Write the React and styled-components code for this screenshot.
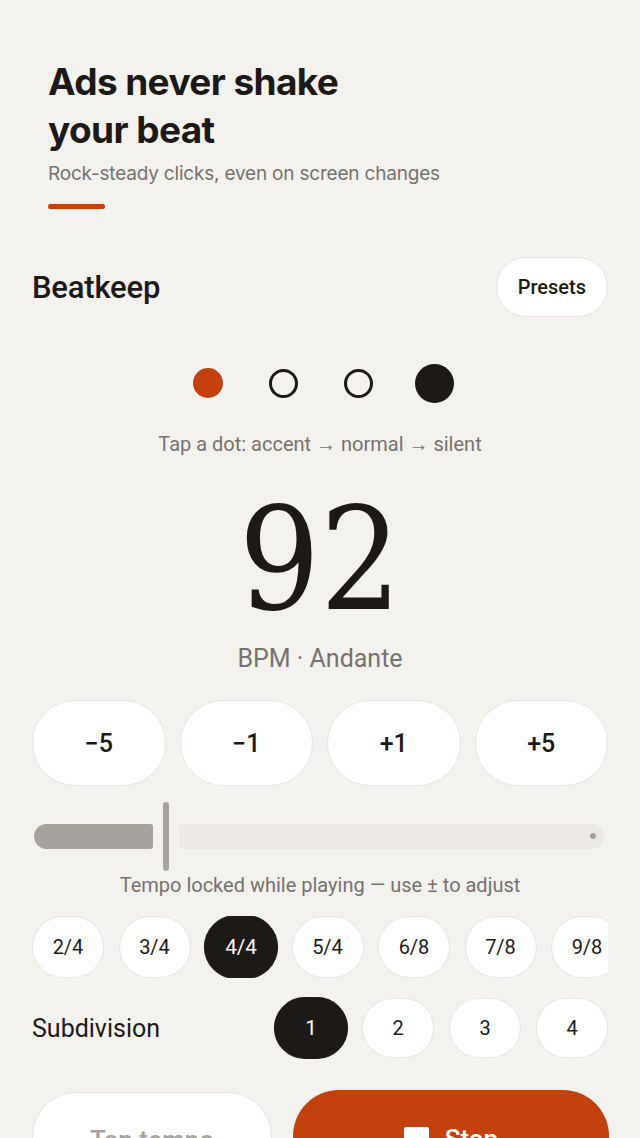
import React from "react";
import styled, { createGlobalStyle, css } from "styled-components";

const GlobalStyle = createGlobalStyle`
  html, body {
    margin: 0;
    padding: 0;
    background: #f4f2ef;
  }
  body {
    font-family: Roboto, "Liberation Sans", sans-serif;
    color: #1c1917;
  }
  * { box-sizing: border-box; }
`;

const beats = ["accent", "normal", "normal", "current"];
const steps = ["\u22125", "\u22121", "+1", "+5"];
const meters = ["2/4", "3/4", "4/4", "5/4", "6/8", "7/8", "9/8"];
const subdivisions = ["1", "2", "3", "4"];

const App = () => {
  return (
    <Page>
      <GlobalStyle />
      <Hero>
        <Headline>
          Ads never shake
          <br />
          your beat
        </Headline>
        <Tagline>Rock-steady clicks, even on screen changes</Tagline>
        <AccentBar />
      </Hero>

      <Main>
        <TopBar>
          <Brand>Beatkeep</Brand>
          <PillButton>Presets</PillButton>
        </TopBar>

        <Dots>
          {beats.map((kind, i) => (
            <Dot key={i} $kind={kind} />
          ))}
        </Dots>
        <Hint>Tap a dot: accent → normal → silent</Hint>

        <Tempo>92</Tempo>
        <TempoLabel>BPM · Andante</TempoLabel>

        <StepRow>
          {steps.map((s) => (
            <StepButton key={s}>{s}</StepButton>
          ))}
        </StepRow>

        <Slider>
          <SliderFill style={{ width: 119 }} />
          <SliderThumb />
          <SliderRest>
            <SliderEnd />
          </SliderRest>
        </Slider>
        <LockHint>Tempo locked while playing — use ± to adjust</LockHint>

        <MeterRow>
          {meters.map((m) => (
            <Chip key={m} $active={m === "4/4"} $h={62}>
              {m}
            </Chip>
          ))}
        </MeterRow>

        <SubRow>
          <SubLabel>Subdivision</SubLabel>
          <SubChips>
            {subdivisions.map((s) => (
              <Chip key={s} $active={s === "1"} $h={60}>
                {s}
              </Chip>
            ))}
          </SubChips>
        </SubRow>

        <ActionRow>
          <TapButton>Tap tempo</TapButton>
          <StopButton>
            <StopIcon />
            Stop
          </StopButton>
        </ActionRow>
      </Main>
    </Page>
  );
};

export default App;

const Page = styled.div`
  width: 640px;
  min-height: 1138px;
  overflow: hidden;
`;

const Hero = styled.header`
  padding: 58px 48px 0;
`;

const Headline = styled.h1`
  margin: 0;
  font-family: Inter, "Liberation Sans", sans-serif;
  font-weight: 700;
  font-size: 37px;
  line-height: 48px;
  letter-spacing: -0.6px;
  color: #1c1917;
`;

const Tagline = styled.p`
  margin: 7px 0 0;
  font-family: Inter, "Liberation Sans", sans-serif;
  font-size: 19px;
  line-height: 26px;
  color: #78716c;
  letter-spacing: -0.2px;
`;

const AccentBar = styled.div`
  margin-top: 17px;
  width: 57px;
  height: 5px;
  border-radius: 3px;
  background: #c2410c;
`;

const Main = styled.main`
  padding: 0 32px;
  display: flex;
  flex-direction: column;
`;

const TopBar = styled.div`
  margin-top: 48px;
  display: flex;
  align-items: center;
  justify-content: space-between;
`;

const Brand = styled.h2`
  margin: 0;
  font-size: 31px;
  font-weight: 500;
  letter-spacing: -0.2px;
`;

const PillButton = styled.button`
  height: 60px;
  padding: 0 21px;
  border-radius: 30px;
  border: 1.5px solid #e7e5e4;
  background: #ffffff;
  font-family: Roboto, sans-serif;
  font-size: 20px;
  font-weight: 500;
  color: #1c1917;
`;

const Dot = styled.span`
  display: block;
  border-radius: 50%;
  width: 30px;
  height: 30px;
  ${({ $kind }) =>
    $kind === "accent"
      ? css`
          background: #c2410c;
        `
      : $kind === "current"
      ? css`
          background: #1c1917;
          width: 39px;
          height: 39px;
          margin: 0 -4.5px;
        `
      : css`
          width: 29px;
          height: 29px;
          border: 3px solid #1c1917;
        `}
`;

const Dots = styled.div`
  margin-top: 46px;
  height: 40px;
  display: flex;
  align-items: center;
  justify-content: center;
  gap: 46px;
  padding-left: 2px;
`;

const Hint = styled.p`
  margin: 28px 0 0;
  text-align: center;
  font-size: 20px;
  line-height: 26px;
  color: #78716c;
`;

const Tempo = styled.div`
  margin-top: 28px;
  text-align: center;
  font-family: "DejaVu Serif Condensed", "DejaVu Serif", "Liberation Serif", serif;
  font-stretch: condensed;
  font-size: 142px;
  line-height: 150px;
  color: #1c1917;
`;

const TempoLabel = styled.p`
  margin: 9px 0 0;
  text-align: center;
  font-size: 25px;
  line-height: 30px;
  color: #78716c;
`;

const StepRow = styled.div`
  margin-top: 26px;
  display: grid;
  grid-template-columns: repeat(4, 1fr);
  gap: 14px;
`;

const StepButton = styled.button`
  height: 86px;
  border-radius: 43px;
  border: 1.5px solid #e7e5e4;
  background: #ffffff;
  font-family: Roboto, sans-serif;
  font-size: 25px;
  font-weight: 500;
  color: #1c1917;
`;

const Slider = styled.div`
  margin-top: 15px;
  height: 70px;
  padding-left: 2px;
  display: flex;
  align-items: center;
`;

const SliderFill = styled.div`
  height: 25px;
  border-radius: 13px 3px 3px 13px;
  background: #a8a29e;
`;

const SliderThumb = styled.div`
  width: 6px;
  height: 69px;
  margin: 0 10px;
  border-radius: 3px;
  background: #a8a29e;
`;

const SliderRest = styled.div`
  flex: 1;
  height: 25px;
  margin-right: 4px;
  border-radius: 3px 13px 13px 3px;
  background: #ece9e6;
  display: flex;
  align-items: center;
  justify-content: flex-end;
  padding-right: 8px;
`;

const SliderEnd = styled.span`
  width: 6px;
  height: 6px;
  border-radius: 50%;
  background: #a8a29e;
`;

const LockHint = styled.p`
  margin: 1px 0 0;
  text-align: center;
  font-size: 20px;
  line-height: 26px;
  color: #78716c;
`;

const Chip = styled.button`
  flex: 0 0 72px;
  width: 72px;
  height: ${({ $h }) => $h}px;
  border-radius: ${({ $h }) => $h / 2}px;
  border: 1.5px solid #e7e5e4;
  background: #ffffff;
  font-family: Roboto, sans-serif;
  font-size: 20px;
  font-weight: 400;
  color: #1c1917;
  padding: 0;
  ${({ $active }) =>
    $active &&
    css`
      background: #1c1917;
      border-color: #1c1917;
      color: #ffffff;
      transform: scale(1.03);
    `}
`;

const MeterRow = styled.div`
  margin-top: 18px;
  margin-right: -32px;
  padding-right: 32px;
  display: flex;
  gap: 14.5px;
  overflow: hidden;
  clip-path: inset(-4px 32px -4px -4px);
`;

const SubRow = styled.div`
  margin-top: 20px;
  display: flex;
  align-items: center;
  justify-content: space-between;
`;

const SubLabel = styled.span`
  font-size: 25px;
  color: #1c1917;
`;

const SubChips = styled.div`
  display: flex;
  gap: 15px;
`;

const ActionRow = styled.div`
  margin-top: 34px;
  display: flex;
  gap: 21px;
  align-items: flex-start;
`;

const TapButton = styled.button`
  flex: 0 0 240px;
  height: 96px;
  border-radius: 44px;
  border: 1.5px solid #e7e5e4;
  background: #ffffff;
  font-family: Roboto, sans-serif;
  font-size: 26px;
  font-weight: 500;
  color: #a8a29e;
`;

const StopButton = styled.button`
  flex: 1;
  height: 98px;
  margin-top: -2px;
  margin-right: -1px;
  border-radius: 46px;
  border: none;
  background: #c2410c;
  font-family: Roboto, sans-serif;
  font-size: 26px;
  font-weight: 500;
  color: #ffffff;
  display: flex;
  align-items: center;
  justify-content: center;
  gap: 16px;
`;

const StopIcon = styled.span`
  width: 25px;
  height: 25px;
  background: #ffffff;
  border-radius: 2px;
`;
